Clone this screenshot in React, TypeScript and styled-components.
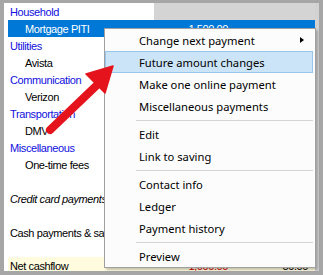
import React from 'react';
import styled, { createGlobalStyle, css } from 'styled-components';

const GlobalStyle = createGlobalStyle`
  html, body {
    margin: 0;
    padding: 0;
    background: #ffffff;
  }
  * {
    box-sizing: border-box;
  }
`;

const Page = styled.div`
  position: relative;
  width: 323px;
  height: 275px;
  overflow: hidden;
`;

const Frame = styled.div`
  display: flex;
  width: 100%;
  height: 100%;
  border: 4px solid #a6a6a6;
  border-top-width: 3px;
  background: #ffffff;
  overflow: hidden;
`;

const Sheet = styled.div`
  flex: 1;
  display: flex;
  flex-direction: column;
  padding-left: 4px;
  min-width: 0;
`;

const RightStrip = styled.div`
  width: 4px;
  background: #d2d2d2;
`;

type RowKind = 'header' | 'group' | 'item' | 'selected' | 'plain' | 'italic' | 'total';

const Row = styled.div<{ $kind: RowKind }>`
  display: grid;
  grid-template-columns: 146px 76px 80px 1fr;
  height: 17px;
  flex-shrink: 0;
  align-items: center;
  font-family: 'Liberation Sans', Arial, sans-serif;
  font-size: 11px;
  letter-spacing: -0.4px;
  color: #000000;
  white-space: nowrap;

  ${({ $kind }) => $kind === 'selected' && css`
    background: #0078d7;
    color: #ffffff;
  `}
  ${({ $kind }) => $kind === 'total' && css`
    background: #fffbdf;
    margin-top: 1px;
  `}
  ${({ $kind }) => $kind === 'italic' && css`
    font-style: italic;
  `}
  ${({ $kind }) => ($kind === 'group' || $kind === 'header') && css`
    color: #1010e0;
  `}
`;

const NameCell = styled.div<{ $indent?: boolean }>`
  padding-left: ${({ $indent }) => ($indent ? '17px' : '2px')};
  overflow: visible;
`;

const AmountCell = styled.div<{ $tone?: 'red' | 'normal' }>`
  text-align: right;
  padding-right: 2px;
  color: ${({ $tone }) => ($tone === 'red' ? '#d40000' : 'inherit')};
`;

const HeaderFill = styled.div`
  grid-column: 2 / 5;
  align-self: stretch;
  background: #d4d4d4;
`;

const Spacer = styled.div<{ $h: number }>`
  height: ${({ $h }) => $h}px;
  flex-shrink: 0;
`;

const Menu = styled.div`
  position: absolute;
  left: 104px;
  top: 28px;
  width: 212px;
  display: flex;
  flex-direction: column;
  background: #fcfcfc;
  border: 1px solid #a0a0a0;
  box-shadow: 2px 2px 2px rgba(0, 0, 0, 0.22);
  font-family: 'Noto Sans', 'Segoe UI', sans-serif;
  font-size: 11.2px;
  color: #000000;
`;

const MenuItem = styled.div<{ $active?: boolean }>`
  display: flex;
  align-items: center;
  justify-content: space-between;
  height: 22px;
  margin-right: 2px;
  padding: 0 8px 0 33px;
  border: 1px solid transparent;
  white-space: nowrap;

  ${({ $active }) => $active && css`
    background: #cce4f7;
    border-color: #99c5ec;
  `}
`;

const SubArrow = styled.span`
  width: 0;
  height: 0;
  border-left: 4px solid #000000;
  border-top: 3.5px solid transparent;
  border-bottom: 3.5px solid transparent;
`;

const Separator = styled.div`
  height: 6px;
  display: flex;
  align-items: center;
  margin: 0 2px 0 31px;

  &::after {
    content: '';
    flex: 1;
    height: 1px;
    background: #d4d4d4;
  }
`;

const Overlay = styled.svg`
  position: absolute;
  left: 0;
  top: 0;
  pointer-events: none;
`;

type Line = { kind: RowKind; name: string; indent?: boolean; a1?: string; a2?: string; red?: boolean };

const tree: Line[] = [
  { kind: 'selected', name: 'Mortgage PITI', indent: true, a1: '1,500.00' },
  { kind: 'group', name: 'Utilities' },
  { kind: 'item', name: 'Avista', indent: true },
  { kind: 'group', name: 'Communication' },
  { kind: 'item', name: 'Verizon', indent: true },
  { kind: 'group', name: 'Transportation' },
  { kind: 'item', name: 'DMV', indent: true },
  { kind: 'group', name: 'Miscellaneous' },
  { kind: 'item', name: 'One-time fees', indent: true },
];

type Entry = { label: string; active?: boolean; sub?: boolean } | 'sep';

const menu: Entry[] = [
  { label: 'Change next payment', sub: true },
  { label: 'Future amount changes', active: true },
  { label: 'Make one online payment' },
  { label: 'Miscellaneous payments' },
  'sep',
  { label: 'Edit' },
  { label: 'Link to saving' },
  'sep',
  { label: 'Contact info' },
  { label: 'Ledger' },
  { label: 'Payment history' },
  'sep',
  { label: 'Preview' },
];

const App: React.FC = () => {
  return (
    <Page>
      <GlobalStyle />
      <Frame>
        <Sheet>
          <Row $kind="header">
            <NameCell>Household</NameCell>
            <HeaderFill />
          </Row>
          {tree.map((line, i) => (
            <Row key={i} $kind={line.kind}>
              <NameCell $indent={line.indent}>{line.name}</NameCell>
              <AmountCell>{line.a1}</AmountCell>
              <AmountCell>{line.a2}</AmountCell>
            </Row>
          ))}
          <Spacer $h={17} />
          <Row $kind="italic">
            <NameCell>Credit card payments</NameCell>
          </Row>
          <Spacer $h={17} />
          <Row $kind="plain">
            <NameCell>Cash payments &amp; savings</NameCell>
          </Row>
          <Spacer $h={15} />
          <Row $kind="total">
            <NameCell>Net cashflow</NameCell>
            <AmountCell $tone="red">1,000.00</AmountCell>
            <AmountCell>50.00</AmountCell>
          </Row>
        </Sheet>
        <RightStrip />
      </Frame>

      <Menu>
        {menu.map((entry, i) =>
          entry === 'sep' ? (
            <Separator key={i} />
          ) : (
            <MenuItem key={i} $active={entry.active}>
              <span>{entry.label}</span>
              {entry.sub && <SubArrow />}
            </MenuItem>
          )
        )}
      </Menu>

      <Overlay width={323} height={275} viewBox="0 0 323 275">
        <line x1={50} y1={130} x2={96} y2={86} stroke="#e5141c" strokeWidth={8} strokeLinecap="round" />
        <polygon points="113,66 86,74 105,93" fill="#e5141c" stroke="#e5141c" strokeWidth={1.5} strokeLinejoin="round" />
      </Overlay>
    </Page>
  );
};

export default App;
